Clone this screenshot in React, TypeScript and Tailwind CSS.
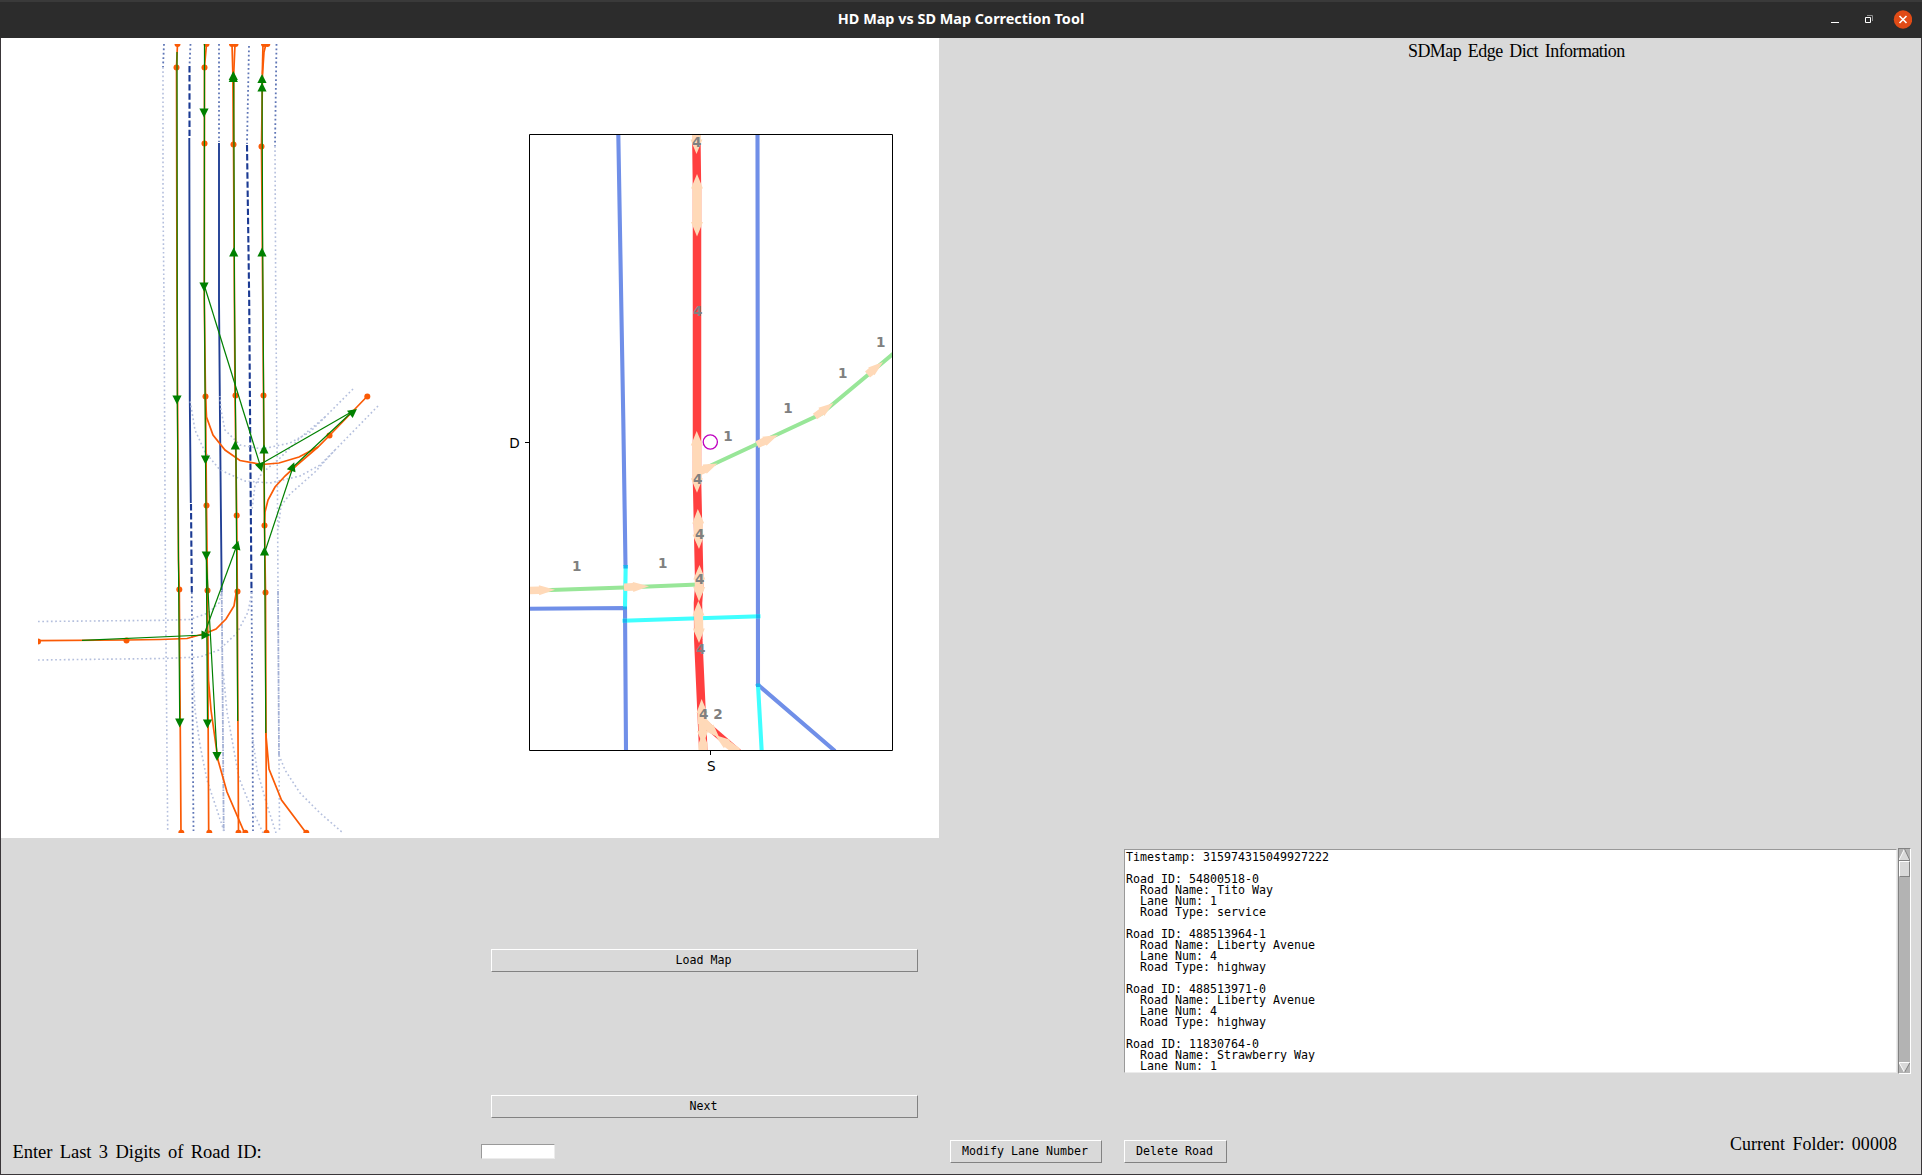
import React from "react";

type Pt = [number, number];

const NAVY = "#1b3a93";
const ORANGE = "#fa5a05";
const GREEN = "#008000";
const PEACH = "#ffd9b8";

type Boundary = { pts: string; kind: "faint" | "dots" | "dash" | "solid" | "mixed" };

const boundaries: Boundary[] = [
  { kind: "dots", pts: "164,44 163,67" },
  { kind: "faint", pts: "163,67 163,200 164,300 165.5,590 167.7,831" },
  { kind: "dots", pts: "190.5,44 189.5,66" },
  { kind: "dash", pts: "189.5,66 189.5,138" },
  { kind: "solid", pts: "189.3,138 189.8,400 190.8,503" },
  { kind: "dash", pts: "191,504 191.8,592" },
  { kind: "dots", pts: "191.8,592 192.3,680 193.5,831" },
  { kind: "dots", pts: "219,44 219,142" },
  { kind: "solid", pts: "219,143 219,300 220,420 221.7,592" },
  { kind: "mixed", pts: "221.7,592 222.5,680 223.7,831" },
  { kind: "dots", pts: "249,46 247,144" },
  { kind: "dash", pts: "247,145 249.2,300 250.3,450 251.5,592" },
  { kind: "dots", pts: "251.5,592 252.5,720 253,831" },
  { kind: "dots", pts: "276.5,44 275,146" },
  { kind: "faint", pts: "275,146 275.7,290 277.5,500 278,590" },
  { kind: "mixed", pts: "278,591 279,755" },
  { kind: "faint", pts: "279,755 279.5,831" },
  { kind: "faint", pts: "353,389 330,412 310,432 290,443 262,449 240,445 225,430 221,410 220,396" },
  { kind: "faint", pts: "378,406 335,450 315,472 290,494 281,506 278,530" },
  { kind: "faint", pts: "335,450 320,465 300,476 270,483 245,481 220,470 205,452 195,430 190,400" },
  { kind: "faint", pts: "325,417 300,438 280,458 262,473 255,485 252,510" },
  { kind: "faint", pts: "38,621.5 163,620.3 190,619.5 208,613 219,603 222,590" },
  { kind: "faint", pts: "38,660 163,658.5 200,657 219,650 237,633 248,612 252,592" },
  { kind: "faint", pts: "193,670 195,710 200,745 207,780 224,831" },
  { kind: "faint", pts: "223,670 227,712 239,778 250,805 263,833" },
  { kind: "faint", pts: "253,740 257,770 267,805 276,833" },
  { kind: "faint", pts: "279,755 285,770 300,793 320,813 343,833" },
];

const boundaryStyle = {
  faint: { stroke: "#b4bfdd", strokeWidth: 1.6, strokeDasharray: "1.7 2.6" },
  dots: { stroke: "#5f76b6", strokeWidth: 1.8, strokeDasharray: "1.8 2.6" },
  dash: { stroke: NAVY, strokeWidth: 2.1, strokeDasharray: "6.4 2.7" },
  solid: { stroke: "#213f95", strokeWidth: 1.9, strokeDasharray: undefined },
  mixed: { stroke: "#a3b0d5", strokeWidth: 1.8, strokeDasharray: "4.5 1 1.5 1" },
};

const centerlines: string[] = [
  "177.5,44 176.5,67 177,300 178.5,560 179.3,590 181,834",
  "206.5,44 204.5,67 204.3,300 205.5,396 206.5,505 207.5,590 208.7,834",
  "235,44 233.8,72 233.5,144 235,395 236.7,515 237.3,591 238.5,834",
  "232,44 232.8,72 233.5,144",
  "266,44 264,52 262.5,74 261.5,146 263.5,395 264.5,525.5 265.5,592 266.4,834",
  "263,44 262.3,74",
  "207.5,630 208.5,680 211,710 218,760 227,792 245,834",
  "265.8,733 269,769 281.5,800 307,834",
  "36,640.7 126.5,640 160,639.5 187,638.5 205,633.5 216,629 226,619 234,606 236.5,591",
  "205.5,396 206.5,417 213,435 225,450 240,460.5 262,464.5 279,463 299,457 318,447 329.5,435.5 367,396.5",
  "264.5,525 265,512 268,500 275,487 285,476 297,465 318,447",
];

const nodes: Pt[] = [
  [177.5, 44], [176.5, 67.5], [179.3, 589.5], [181.3, 832.7],
  [206.5, 44], [204.5, 67.5], [204.5, 143.5], [205.5, 396.5], [206.5, 505.5], [207.5, 590.5], [209.3, 832.7],
  [235.5, 44], [232, 44], [233.5, 144.5], [235.5, 395.5], [236.7, 515.5], [237.5, 591.5], [238.5, 832.7],
  [267.3, 44], [264, 44], [261.5, 146.5], [263.5, 395.5], [264.5, 525.5], [265.5, 592.5], [266.5, 832.7],
  [245.3, 832.7], [306.3, 832.7], [38, 641.5], [126.5, 640.5], [367.3, 396.5], [329.5, 435.5],
];

const links: string[] = [
  "177,52 177.3,400 178.7,590 179.7,722",
  "204.5,44 204.3,286 205.5,459 206.3,555 207.5,723",
  "233.7,76 234.5,300 236,460 237.7,721",
  "262,78 262.7,252 264,449 264.7,551 265.8,733",
  "204.5,286 261,468",
  "260,464.5 353,411",
  "292,468 353,411",
  "264.5,553 293,467",
  "205,632 237,545",
  "82,640.3 205,635",
  "206.3,556 208.5,600 217,756",
];

const heads: [number, number, number][] = [
  [177, 399.5, 180], [179.7, 722.5, 180],
  [204, 112.5, 180], [204, 286.5, 180], [205.5, 459.5, 180], [206.3, 555.5, 180], [207.5, 723.5, 180], [217, 756, 180],
  [233.3, 78, 0], [233.3, 76, 0], [233.7, 252.5, 0], [235.3, 445.5, 0],
  [262, 79, 0], [262, 87.5, 0], [262, 252.5, 0], [264, 449.5, 0], [264.5, 551.5, 0],
  [260.5, 467, 163], [353, 412, 52], [292.5, 467, 20], [237, 545.5, 15], [205.5, 635, 90],
];

/** Outline of a one- or two-headed arrow between two points. */
function arrow(x1: number, y1: number, x2: number, y2: number, both = false, shaft = 4.5, head = 6, hl = 14.5) {
  const len = Math.hypot(x2 - x1, y2 - y1);
  const ux = (x2 - x1) / len;
  const uy = (y2 - y1) / len;
  const at = (d: number, w: number) =>
    `${(x1 + ux * d - uy * w).toFixed(1)},${(y1 + uy * d + ux * w).toFixed(1)}`;
  const front = [at(len - hl, shaft), at(len - hl, head), at(len, 0), at(len - hl, -head), at(len - hl, -shaft)];
  const back = both
    ? [at(hl, -shaft), at(hl, -head), at(0, 0), at(hl, head), at(hl, shaft)]
    : [at(0, -shaft), at(0, shaft)];
  return [...front, ...back].join(" ");
}

const arrows: string[] = [
  arrow(696.5, 134, 696.5, 154),
  arrow(697, 174, 697, 236.5, true),
  arrow(697, 492.7, 696.7, 431, true),
  arrow(699, 549, 697.8, 509, true),
  arrow(699, 601.5, 699.5, 565, true),
  arrow(699, 643, 698.3, 601, true),
  arrow(702.3, 724, 701.6, 699, false, 4.5, 5.5, 14),
  arrow(702.3, 719, 703, 745, false, 4, 5.5, 14),
  arrow(703, 751, 703, 732, false, 4.5, 5, 13),
  arrow(704, 722, 719.5, 738, false, 4, 5, 14),
  arrow(738, 752, 715, 735, false, 4, 5.3, 15),
  arrow(698, 472, 717.5, 463.5, false, 4, 5, 14),
  arrow(757, 444.7, 778, 435, false, 3.8, 5, 15),
  arrow(815, 416.5, 833.5, 403, false, 3.5, 5, 15),
  arrow(867.5, 374.5, 883, 362, false, 4, 5, 15),
  arrow(529, 590.5, 555, 589.8, false, 3.8, 5, 16),
  arrow(624, 587.3, 649, 586.3, false, 3.8, 5, 16),
];

const laneLabels: [number, number, string][] = [
  [696.7, 147, "4"], [697.7, 316, "4"], [697.7, 484, "4"], [699.7, 539, "4"], [699.7, 584, "4"],
  [700.7, 654, "4"], [703.7, 719, "4"], [718, 719, "2"],
  [880.7, 347, "1"], [842.8, 378, "1"], [788, 413, "1"], [728, 441, "1"], [576.8, 571, "1"], [662.8, 568, "1"],
];

function MapFigure() {
  return (
    <svg className="block h-[800px] w-[938px] bg-white" viewBox="1 38 938 800" fill="none">
      <defs>
        <clipPath id="hd"><rect x="38" y="44" width="360" height="789" /></clipPath>
        <clipPath id="sd"><rect x="529" y="134" width="364" height="617" /></clipPath>
      </defs>
      <g clipPath="url(#hd)">
        {boundaries.map((b, i) => (
          <polyline key={i} points={b.pts} {...boundaryStyle[b.kind]} />
        ))}
        {centerlines.map((p, i) => (
          <polyline key={i} points={p} stroke={ORANGE} strokeWidth={1.7} />
        ))}
        {nodes.map(([x, y], i) => (
          <circle key={i} cx={x} cy={y} r={3} fill={ORANGE} />
        ))}
        {links.map((p, i) => (
          <polyline key={i} points={p} stroke={GREEN} strokeWidth={1.2} />
        ))}
        {heads.map(([x, y, r], i) => (
          <path key={i} d="M0-5 4.6 4H-4.6Z" fill={GREEN} transform={`translate(${x} ${y}) rotate(${r})`} />
        ))}
      </g>
      <g clipPath="url(#sd)">
        <g stroke="#708fe8" strokeWidth="4.1">
          <path d="M618.3 134 623.3 420 625.5 566M625 607 626 751M529 608.8 627 608" />
          <path d="M757.5 134 758 686M756.5 683.5 835 751" />
        </g>
        <g stroke="#40ffff" strokeWidth="4.1">
          <path d="M625.7 565 625 607M622.5 620.7 760.5 616.2M758 685 761.7 751" />
        </g>
        <g fill="#1fb0ee">
          <path d="M623.5 565h4.2v3.5h-4.2zM623 606.5h4v3h-4zM623 618.7h4v4h-4zM756 614.3h4v4h-4zM756 683.5h4.2v3.5H756z" />
        </g>
        <g stroke="#98e698" strokeWidth="4">
          <path d="M529 590.8 624 587.5 698 584.5M699 471 757 444 821 414 875 369 894 353" />
        </g>
        <path stroke="#ff3f3f" strokeWidth="8.5" d="M696.3 134 697 190V480L699.3 585 698 603 698.3 640 703.3 751" />
        <path stroke="#ff3f3f" strokeWidth="7" d="M702 721 739 753" />
        {arrows.map((p, i) => (
          <polygon key={i} points={p} fill={PEACH} />
        ))}
      </g>
      <circle cx="710.3" cy="442" r="7.1" stroke="#bf00bf" strokeWidth="1.3" />
      <path d="M529.5 134.5h363v616h-363zM525 442.5h4M710.5 751v4" stroke="#000" />
      <g fontFamily="'DejaVu Sans', sans-serif" fontSize="13.6" textAnchor="middle">
        {laneLabels.map(([x, y, t], i) => (
          <text key={i} x={x} y={y} fill="#808080" fontWeight="bold">{t}</text>
        ))}
        <text x="514.5" y="447.5" fill="#000">D</text>
        <text x="711.3" y="771" fill="#000">S</text>
      </g>
    </svg>
  );
}

const roadInfo = `Timestamp: 315974315049927222

Road ID: 54800518-0
  Road Name: Tito Way
  Lane Num: 1
  Road Type: service

Road ID: 488513964-1
  Road Name: Liberty Avenue
  Lane Num: 4
  Road Type: highway

Road ID: 488513971-0
  Road Name: Liberty Avenue
  Lane Num: 4
  Road Type: highway

Road ID: 11830764-0
  Road Name: Strawberry Way
  Lane Num: 1`;

function TkButton({ className, children }: { className: string; children: React.ReactNode }) {
  return (
    <button
      className={`flex h-[23px] items-center justify-center whitespace-pre border border-t-white border-l-white border-r-[#828282] border-b-[#828282] bg-[#d9d9d9] pr-[2px] font-['DejaVu_Sans_Mono',monospace] text-[11.63px] leading-[11px] text-black ${className}`}
    >
      {children}
    </button>
  );
}

function TkLabel({ className, children }: { className: string; children: React.ReactNode }) {
  return (
    <div className={`origin-left whitespace-nowrap font-['Liberation_Serif',serif] text-[19.5px] leading-[20px] text-black ${className}`}>
      {children}
    </div>
  );
}

function TitleBar() {
  return (
    <header className="relative flex h-[38px] items-center justify-end border-t-2 border-[#3a3a3a] bg-[#2c2c2c]">
      <h1 className="absolute inset-0 flex items-center justify-center pb-[2px] font-['Noto_Sans',sans-serif] text-[14.4px] font-bold tracking-[0.02px] text-white">
        HD Map vs SD Map Correction Tool
      </h1>
      <div className="relative flex items-center pr-[10px] pb-[2px]">
        <svg className="h-5 w-[91px]" viewBox="0 0 91 20" fill="none">
          <path d="M10 13.5h8" stroke="#fff" />
          <path d="M46 6.5h5.5V12" stroke="#8c8c8c" />
          <path d="M44.5 8.5h5v5h-5z" stroke="#fff" />
          <circle cx="82" cy="10.5" r="9.2" fill="#e04b16" />
          <path d="m78.5 7 7 7m0-7-7 7" stroke="#fff" strokeWidth="1.6" />
        </svg>
      </div>
    </header>
  );
}

function Scrollbar() {
  return (
    <div className="ml-px flex h-[226px] w-[13px] flex-col justify-between border border-t-[#828282] border-l-[#828282] border-r-white border-b-white bg-[#b3b3b3]">
      <div>
        <svg className="block h-3 w-[11px]" viewBox="0 0 11 12">
          <path d="M5.5 0 11 11.5H0Z" fill="#d9d9d9" />
          <path d="M5.5 0 0 11" stroke="#fff" />
          <path d="M5.5 0 11 11.5H0" stroke="#828282" fill="none" />
        </svg>
        <div className="h-[16px] border border-t-white border-l-white border-r-[#828282] border-b-[#828282] bg-[#d9d9d9]" />
      </div>
      <svg className="block h-[11px] w-[11px]" viewBox="0 0 11 11">
        <path d="M0 .5H11L5.5 10.5Z" fill="#d9d9d9" />
        <path d="M11 .5H0L5.5 10.5" stroke="#fff" fill="none" />
        <path d="M11 .5 5.5 10.5" stroke="#828282" />
      </svg>
    </div>
  );
}

export default function App() {
  return (
    <div className="flex h-[1175px] w-[1922px] flex-col overflow-hidden bg-[#3a3639]">
      <TitleBar />
      <main className="mx-px mb-px grid flex-1 grid-cols-[938px_982px] grid-rows-[800px_336px] bg-[#d9d9d9]">
        <MapFigure />
        <section className="pl-[469px] pt-[3px]">
          <TkLabel className="w-[236px] scale-x-[0.92] tracking-[-0.58px] [word-spacing:3px]">SDMap Edge Dict Information</TkLabel>
        </section>

        <section className="flex flex-col">
          <TkButton className="mt-[111px] ml-[490px] w-[427px]">Load Map</TkButton>
          <TkButton className="mt-[123px] ml-[490px] w-[427px]">Next</TkButton>
          <div className="mt-[22px] flex h-[23px] items-center">
            <TkLabel className="w-[468px] pl-[12px] scale-x-[0.95] tracking-[-0.05px] [word-spacing:3px]">Enter Last 3 Digits of Road ID:</TkLabel>
            <div className="ml-3 h-[15px] w-[74px] border border-t-[#999] border-l-[#999] border-r-[#ececec] border-b-[#ececec] bg-white" />
          </div>
        </section>

        <section className="flex flex-col">
          <div className="flex pt-[10px] pl-[185px]">
            <pre className="mt-px h-[224px] w-[773px] overflow-hidden border border-t-[#999] border-l-[#999] border-r-[#ececec] border-b-[#ececec] bg-white pt-[2px] pl-px font-['DejaVu_Sans_Mono',monospace] text-[11.63px] leading-[11px] text-black">
              {roadInfo}
            </pre>
            <Scrollbar />
          </div>
          <div className="mt-[56px] flex items-start">
            <TkButton className="mt-[10px] ml-[11px] w-[152px]">Modify Lane Number</TkButton>
            <TkButton className="mt-[10px] ml-[22px] w-[103px]">Delete Road</TkButton>
            <TkLabel className="mt-[4px] ml-[503px] scale-x-[0.92] tracking-[0.05px] [word-spacing:3px]">Current Folder: 00008</TkLabel>
          </div>
        </section>
      </main>
    </div>
  );
}
